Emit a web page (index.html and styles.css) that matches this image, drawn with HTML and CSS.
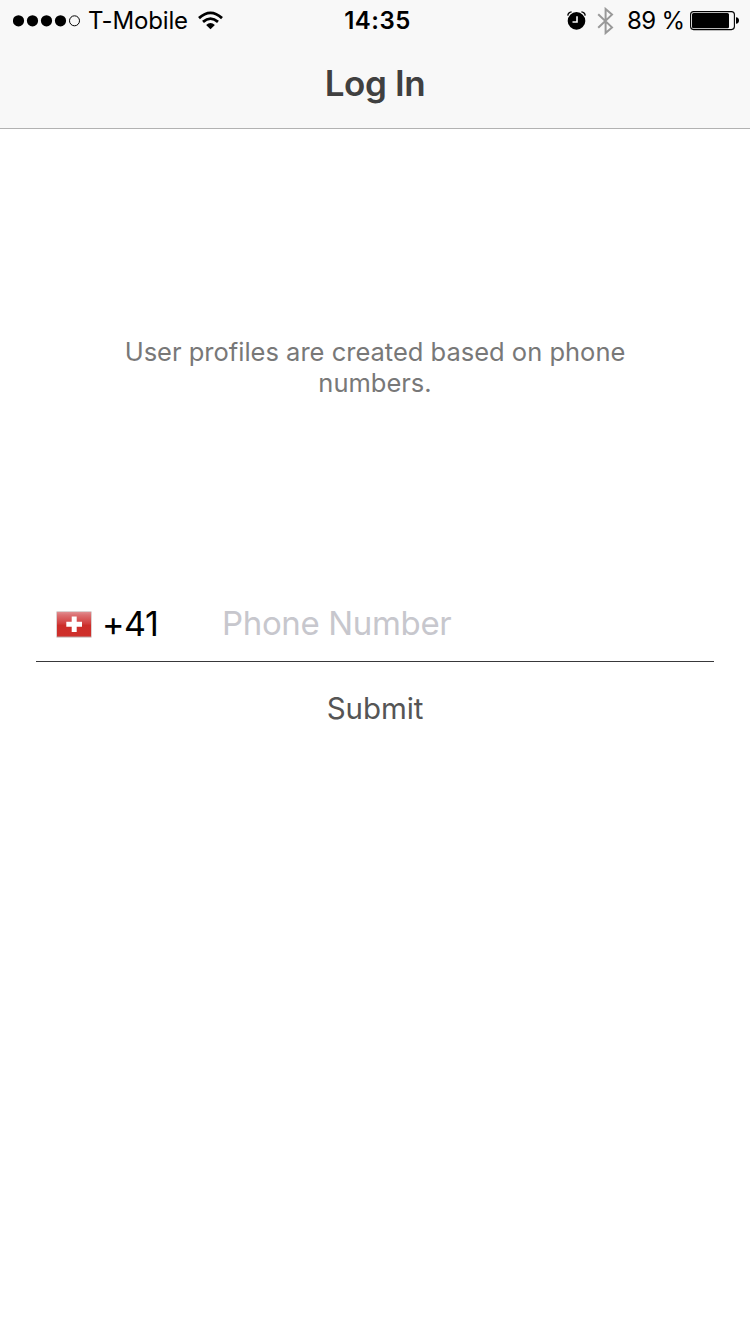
FILE: index.html
```html
<!DOCTYPE html>
<html lang="en">
<head>
<meta charset="utf-8">
<title>Log In</title>
<link rel="stylesheet" href="styles.css">
</head>
<body>
<header class="navbar">
  <div class="status">
    <div class="status-left">
      <svg class="signal" width="68" height="12" viewBox="0 0 68 12">
        <circle cx="5.5" cy="5.8" r="5.6"/><circle cx="19.5" cy="5.8" r="5.6"/><circle cx="33.5" cy="5.8" r="5.6"/><circle cx="47.5" cy="5.8" r="5.6"/>
        <circle cx="61.5" cy="5.8" r="5" fill="none" stroke="#000"/>
      </svg>
      <span class="carrier">T-Mobile</span>
      <svg class="wifi" width="26" height="20" viewBox="0 0 26 20">
        <path d="M1 7.1Q12.5-3.3 24 7.1M5 10.9Q12.5 4.3 20 10.9" fill="none" stroke="#000" stroke-width="2.8"/>
        <path d="M8.1 14Q12.5 10.2 16.9 14L12.5 18.3Z"/>
      </svg>
    </div>
    <span class="clock">14:35</span>
    <div class="status-right">
      <svg class="alarm" width="20" height="20" viewBox="0 0 20 20">
        <circle cx="9.5" cy="9.9" r="8.8"/>
        <path d="M.8 4.6Q1.2 1.2 4.6.9M14.4.9Q17.8 1.2 18.2 4.6" fill="none" stroke="#000" stroke-width="1.4"/>
        <path d="M10 5.2V11H5.5" fill="none" stroke="#f8f8f8" stroke-width="1.6"/>
      </svg>
      <svg class="bluetooth" width="17" height="28" viewBox="0 0 17 28">
        <path d="M1.2 7.2L15 20.4L8.6 26V2L15 7.6L1.2 20.8" fill="none" stroke="#999" stroke-width="2"/>
      </svg>
      <span class="percent">89 %</span>
      <svg class="battery" width="50" height="20" viewBox="0 0 50 20">
        <rect x=".6" y=".6" width="43.8" height="18" rx="3" fill="none" stroke="#000" stroke-width="1.1"/>
        <rect x="2" y="2" width="37" height="15.2" rx="1.5"/>
        <path d="M46 6.2Q49 6.5 49 9.5T46 12.8Z"/>
      </svg>
    </div>
  </div>
  <h1 class="title">Log In</h1>
</header>
<main class="login">
  <p class="intro">User profiles are created based on phone numbers.</p>
  <div class="phone">
    <svg class="flag" width="36" height="27" viewBox="0 0 36 27">
      <defs><linearGradient id="red" x2="0" y2="1"><stop offset="0" stop-color="#e08e90"/><stop offset=".12" stop-color="#dc7072"/><stop offset=".46" stop-color="#d2403f"/><stop offset=".55" stop-color="#cc2d29"/><stop offset="1" stop-color="#cf2f2b"/></linearGradient></defs>
      <rect x=".5" y=".5" width="35" height="26" fill="#b9a3a3"/>
      <rect x="1" y="1" width="34" height="24.5" fill="url(#red)"/>
      <path d="M15.7 5.5H20.7V10.8H26V15.8H20.7V21H15.7V15.8H10.3V10.8H15.7Z" fill="#fff"/>
    </svg>
    <span class="code">+41</span>
    <input class="number" type="tel" placeholder="Phone Number">
  </div>
  <button class="submit">Submit</button>
</main>
</body>
</html>
```
FILE: styles.css
```css
* { box-sizing: border-box; }
body {
  margin: 0;
  height: 1334px;
  background: #fff;
  font-family: Inter, "Liberation Sans", sans-serif;
  color: #000;
}
svg { display: block; flex: none; }
.navbar {
  height: 129px;
  background: #f8f8f8;
  border-bottom: 1px solid #b2b2b2;
}
.status {
  display: grid;
  grid-template-columns: 1fr auto 1fr;
  align-items: center;
  height: 41px;
  padding: 0 10px 0 13px;
  font-size: 24px;
  line-height: 41px;
  white-space: nowrap;
}
.status-left, .status-right { display: flex; align-items: center; }
.status-right { justify-content: flex-end; }
.carrier { width: 99px; margin-left: 7px; letter-spacing: -.15px; }
.wifi { margin-left: 11px; }
.clock { padding-left: 2px; font-weight: 600; letter-spacing: .5px; }
.bluetooth { margin: 0 13px 0 10px; }
.percent { width: 58px; margin-right: 5px; letter-spacing: -.7px; }
.title {
  margin: 0;
  padding-top: 19px;
  font-size: 35px;
  font-weight: 600;
  line-height: 46px;
  letter-spacing: -.4px;
  text-align: center;
  color: #404040;
}
.login {
  display: flex;
  flex-direction: column;
  padding: 207px 36px 0;
}
.intro {
  width: 540px;
  margin: 0 auto;
  font-size: 25.5px;
  line-height: 31px;
  text-align: center;
  color: #787878;
}
.phone {
  display: flex;
  align-items: center;
  height: 77px;
  margin-top: 187px;
  padding-left: 20px;
  border-bottom: 1px solid #38383a;
}
.flag { margin-top: 3px; }
.code { width: 120px; margin-left: 10px; font-size: 34px; letter-spacing: -.4px; }
.number {
  flex: 1;
  min-width: 0;
  padding: 0;
  border: 0;
  outline: 0;
  background: none;
  font: 33px Inter, "Liberation Sans", sans-serif;
  letter-spacing: -.35px;
}
.number::placeholder { color: #c7c7cd; opacity: 1; }
.submit {
  align-self: center;
  height: 60px;
  margin-top: 16px;
  padding: 0;
  border: 0;
  background: none;
  font: 29.5px Inter, "Liberation Sans", sans-serif;
  letter-spacing: -.1px;
  color: #555;
}
```
